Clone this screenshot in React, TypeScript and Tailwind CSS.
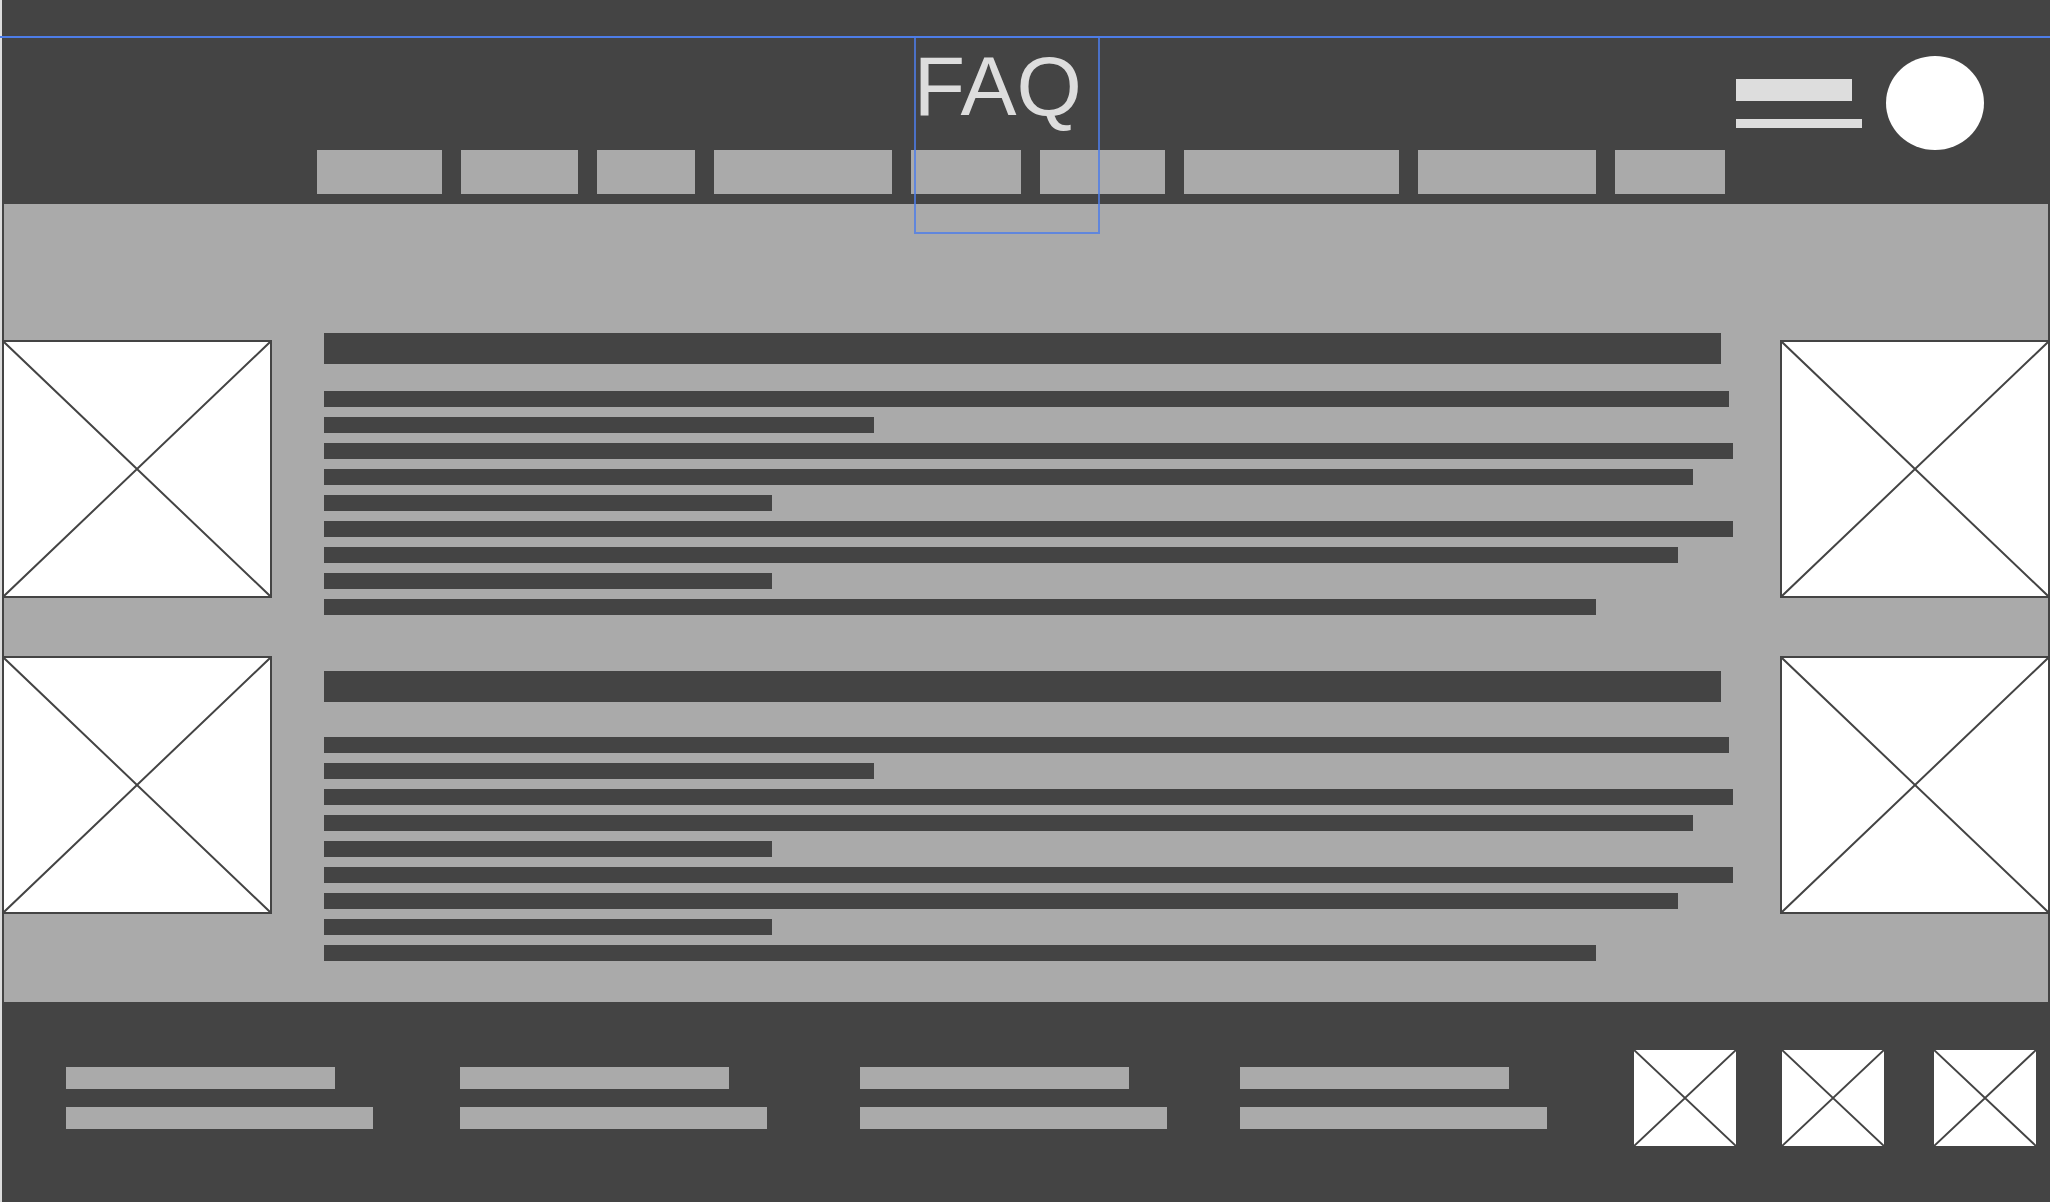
const NAV_ITEMS = [
  { label: "Home", size: 125 },
  { label: "About", size: 117 },
  { label: "News", size: 98 },
  { label: "Services", size: 178 },
  { label: "FAQ", size: 110 },
  { label: "Contact", size: 125 },
  { label: "Resources", size: 215 },
  { label: "Community", size: 178 },
  { label: "More", size: 110 },
];

const LINE_WIDTHS = ["99.7%", "39%", "100%", "97.15%", "31.8%", "100%", "96.1%", "31.8%", "90.3%"];

function Cross() {
  return (
    <svg className="block h-full w-full" viewBox="0 0 100 100" preserveAspectRatio="none" aria-hidden="true">
      <path d="M0 0L100 100M100 0L0 100" stroke="#444444" strokeWidth="2" vectorEffect="non-scaling-stroke" />
    </svg>
  );
}

function SideImages() {
  return (
    <aside className="-mx-0.5 flex w-[270px] shrink-0 flex-col gap-[58px] pt-[136px]">
      <div className="h-[258px] border-2 border-[#444444] bg-white">
        <Cross />
      </div>
      <div className="h-[258px] border-2 border-[#444444] bg-white">
        <Cross />
      </div>
    </aside>
  );
}

function TextBlock({ gap }: { gap: string }) {
  return (
    <section className={`flex flex-col ${gap}`}>
      <div className="h-[31px] w-[99.15%] bg-[#444444]" />
      <div className="flex flex-col gap-2.5">
        {LINE_WIDTHS.map((width, i) => (
          <div key={i} className="h-4 bg-[#444444]" style={{ width }} />
        ))}
      </div>
    </section>
  );
}

function FooterLinks() {
  return (
    <div className="flex flex-col gap-[18px] pt-[17px]">
      <a href="#" aria-label="Footer link" className="block h-[22px] w-[269px] max-w-full bg-[#aaaaaa]" />
      <a href="#" aria-label="Footer link" className="block h-[22px] w-[307px] max-w-full bg-[#aaaaaa]" />
    </div>
  );
}

function FooterImage() {
  return (
    <div className="h-24 w-[102px] bg-white">
      <Cross />
    </div>
  );
}

export default function App() {
  return (
    <div className="flex min-h-screen flex-col border-l-2 border-[#dddddd] bg-[#444444] font-['Liberation_Sans',Arial,sans-serif]">
      <header className="relative pt-9 pb-2.5">
        <div className="flex h-[114px] items-start pr-[66px]">
          <div className="relative z-10 ml-[46%] w-[186px]">
            <h1 className="pt-0.5 text-[84px] leading-[96px] text-[#dddddd]">FAQ</h1>
            <div className="absolute inset-x-0 top-0 h-[198px] border-2 border-[#4d7de8]/80" />
          </div>
          <div className="ml-auto flex gap-6 pt-5">
            <div className="flex flex-col gap-[18px] pt-[23px]">
              <div className="h-[22px] w-[116px] bg-[#dddddd]" />
              <div className="h-[9px] w-[126px] bg-[#dddddd]" />
            </div>
            <button type="button" aria-label="Profile" className="h-[94px] w-[98px] rounded-[50%] bg-white" />
          </div>
        </div>
        <nav aria-label="Main" className="mr-[325px] ml-[315px] flex h-11 gap-[19px]">
          {NAV_ITEMS.map((item) => (
            <a
              key={item.label}
              href="#"
              aria-label={item.label}
              className="basis-0 bg-[#aaaaaa]"
              style={{ flexGrow: item.size }}
            />
          ))}
        </nav>
        <div className="absolute top-9 right-0 -left-0.5 z-20 h-0.5 bg-[#4d7de8]" />
      </header>

      <main className="flex border-x-2 border-[#444444] bg-[#aaaaaa]">
        <SideImages />
        <div className="flex min-w-0 flex-1 flex-col gap-14 pt-[129px] pr-[49px] pb-[41px] pl-[54px]">
          <TextBlock gap="gap-[27px]" />
          <TextBlock gap="gap-[35px]" />
        </div>
        <SideImages />
      </main>

      <footer className="grid grid-cols-[394fr_400fr_380fr_394fr_148fr_152fr_102fr] pt-12 pr-3.5 pb-14 pl-16">
        <FooterLinks />
        <FooterLinks />
        <FooterLinks />
        <FooterLinks />
        <FooterImage />
        <FooterImage />
        <FooterImage />
      </footer>
    </div>
  );
}
